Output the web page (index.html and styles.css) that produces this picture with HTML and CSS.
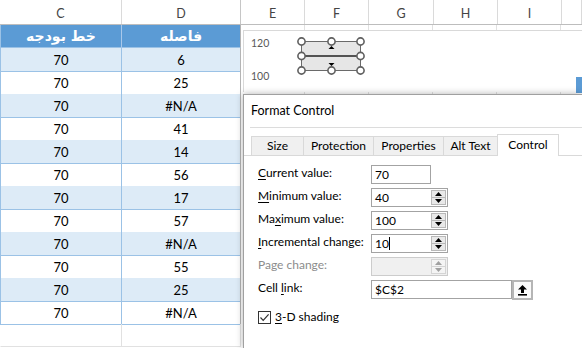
FILE: index.html
```html
<!DOCTYPE html>
<html>
<head>
<meta charset="utf-8">
<link rel="stylesheet" href="styles.css">
</head>
<body>
<div class="sheet">
  <div class="colheads">
    <div class="ch">C</div>
    <div class="ch ch-d">D</div>
    <div class="ch">E</div>
    <div class="ch">F</div>
    <div class="ch">G</div>
    <div class="ch">H</div>
    <div class="ch">I</div>
    <div class="ch"></div>
  </div>
  <div class="main">
    <div class="table">
      <div class="row head"><div class="cell" dir="rtl">خط بودجه</div><div class="cell" dir="rtl">فاصله</div></div>
      <div class="row alt"><div class="cell">70</div><div class="cell">6</div></div>
      <div class="row"><div class="cell">70</div><div class="cell">25</div></div>
      <div class="row alt"><div class="cell">70</div><div class="cell">#N/A</div></div>
      <div class="row"><div class="cell">70</div><div class="cell">41</div></div>
      <div class="row alt"><div class="cell">70</div><div class="cell">14</div></div>
      <div class="row"><div class="cell">70</div><div class="cell">56</div></div>
      <div class="row alt"><div class="cell">70</div><div class="cell">17</div></div>
      <div class="row"><div class="cell">70</div><div class="cell">57</div></div>
      <div class="row alt"><div class="cell">70</div><div class="cell">#N/A</div></div>
      <div class="row"><div class="cell">70</div><div class="cell">55</div></div>
      <div class="row alt"><div class="cell">70</div><div class="cell">25</div></div>
      <div class="row"><div class="cell">70</div><div class="cell">#N/A</div></div>
      <div class="row empty"><div class="cell"></div><div class="cell"></div></div>
    </div>
    <div class="right">
      <div class="chart">
        <span class="axis a1">120</span>
        <span class="axis a2">100</span>
        <svg class="spinctl" width="72" height="42" viewBox="0 0 72 42">
          <rect x="5.5" y="5.5" width="59" height="29" fill="#e6e6e6" stroke="#6a6a6a" stroke-width="1"/>
          <line x1="5.5" y1="20" x2="64.5" y2="20" stroke="#222" stroke-width="1.5"/>
          <path d="M32.5 13 L38.5 13 L35.5 10 Z" fill="#000"/>
          <path d="M32.5 27 L38.5 27 L35.5 30 Z" fill="#000"/>
          <g fill="#fff" stroke="#5f5f5f" stroke-width="1.6">
            <circle cx="5.5" cy="5.5" r="3.6"/>
            <circle cx="35.5" cy="5.5" r="3.6"/>
            <circle cx="64.5" cy="5.5" r="3.6"/>
            <circle cx="5.5" cy="20" r="3.6"/>
            <circle cx="64.5" cy="20" r="3.6"/>
            <circle cx="5.5" cy="34.5" r="3.6"/>
            <circle cx="35.5" cy="34.5" r="3.6"/>
            <circle cx="64.5" cy="34.5" r="3.6"/>
          </g>
        </svg>
        <div class="bar"></div>
      </div>
      <div class="dialog">
        <div class="title">Format Control</div>
        <div class="tabs">
          <div class="tab t-size">Size</div>
          <div class="tab t-prot">Protection</div>
          <div class="tab t-prop">Properties</div>
          <div class="tab t-alt">Alt Text</div>
          <div class="tab t-ctl sel">Control</div>
        </div>
        <div class="page">
          <div class="form">
            <label class="lbl"><u>C</u>urrent value:</label>
            <div class="box w60"><span class="val">70</span></div>

            <label class="lbl"><u>M</u>inimum value:</label>
            <div class="box w77"><span class="val">40</span>
              <div class="spin"><div class="half"><svg width="7" height="4" viewBox="0 0 7 4"><path d="M0 4 L3.5 0 L7 4 Z"/></svg></div><div class="half"><svg width="7" height="4" viewBox="0 0 7 4"><path d="M0 0 L3.5 4 L7 0 Z"/></svg></div></div>
            </div>

            <label class="lbl">Ma<u>x</u>imum value:</label>
            <div class="box w77"><span class="val">100</span>
              <div class="spin"><div class="half"><svg width="7" height="4" viewBox="0 0 7 4"><path d="M0 4 L3.5 0 L7 4 Z"/></svg></div><div class="half"><svg width="7" height="4" viewBox="0 0 7 4"><path d="M0 0 L3.5 4 L7 0 Z"/></svg></div></div>
            </div>

            <label class="lbl"><u>I</u>ncremental change:</label>
            <div class="box w77"><span class="val">10<span class="caret"></span></span>
              <div class="spin"><div class="half"><svg width="7" height="4" viewBox="0 0 7 4"><path d="M0 4 L3.5 0 L7 4 Z"/></svg></div><div class="half"><svg width="7" height="4" viewBox="0 0 7 4"><path d="M0 0 L3.5 4 L7 0 Z"/></svg></div></div>
            </div>

            <label class="lbl dis">Page change:</label>
            <div class="box w77 disabled"><span class="val"></span>
              <div class="spin"><div class="half"><svg width="7" height="4" viewBox="0 0 7 4"><path d="M0 4 L3.5 0 L7 4 Z"/></svg></div><div class="half"><svg width="7" height="4" viewBox="0 0 7 4"><path d="M0 0 L3.5 4 L7 0 Z"/></svg></div></div>
            </div>

            <label class="lbl">Cell <u>l</u>ink:</label>
            <div class="linkwrap">
              <div class="box w141"><span class="val">$C$2</span></div>
              <div class="refbtn"><svg width="11" height="12" viewBox="0 0 11 12"><path d="M5.5 1 L10 5.5 H7 V9 H4 V5.5 H1 Z" fill="#000"/><rect x="1" y="10" width="9" height="1.6" fill="#000"/></svg></div>
            </div>
          </div>
          <div class="check">
            <span class="cb"><svg width="11" height="11" viewBox="0 0 11 11"><path d="M1.5 5.5 L4.2 8.3 L9.6 2.4" fill="none" stroke="#333" stroke-width="1.2"/></svg></span>
            <span class="cbtext"><u>3</u>-D shading</span>
          </div>
        </div>
      </div>
    </div>
  </div>
</div>
</body>
</html>
```
FILE: styles.css
```css
* { box-sizing: border-box; margin: 0; padding: 0; }
html, body { width: 582px; height: 348px; overflow: hidden; background: #fff; }
body { font-family: Lato, "Open Sans", sans-serif; color: #000; }

.sheet { display: flex; flex-direction: column; height: 348px; }

.colheads {
  display: grid;
  grid-template-columns: 122px 119px 64px 64px 65px 64px 64px 1fr;
  height: 25px;
  border-bottom: 1px solid #bdbdbd;
  background: #fff;
  flex: none;
}
.ch {
  border-right: 1px solid #dadada;
  text-align: center;
  font-size: 12.5px;
  line-height: 16px;
  padding-top: 6px;
  color: #444;
}
.ch-d { border-right-color: #c6c6c6; }

.main { display: grid; grid-template-columns: 241px 1fr; flex: 1; min-height: 0; }

.table { display: flex; flex-direction: column; }
.row { display: grid; grid-template-columns: 122px 119px; height: 23px; flex: none; }
.cell {
  border-bottom: 1px solid #9bc2e6;
  border-right: 1px solid #9bc2e6;
  text-align: center;
  font-size: 13px;
  line-height: 22px;
  padding-top: 1px;
}
.cell:first-child { border-left: 1px solid #9bc2e6; }
.cell:last-child { border-right-color: #b4b4b4; }
.row.alt .cell { background: #ddebf7; }
.row.head .cell {
  background: #5b9bd5;
  color: #fff;
  font-family: "DejaVu Sans", sans-serif;
  font-weight: bold;
  font-size: 14px;
  line-height: 22px;
  padding-top: 0;
}
.row.head .cell:first-child { border-right-color: #a9c8ea; }
.row.empty .cell { border-color: #e1e1e1; }
.row.empty .cell:first-child { border-left-color: transparent; }

.right {
  display: flex;
  flex-direction: column;
  padding: 5px 0 0 2px;
  background: #fff repeating-linear-gradient(to right, transparent 0 63px, #e1e1e1 63px 64px);
  min-height: 0;
}

.chart {
  position: relative;
  height: 62px;
  flex: none;
  background: #fff;
  border-top: 1px solid #d9d9d9;
  border-left: 1px solid #d9d9d9;
}
.axis {
  position: absolute;
  left: 7px;
  font-size: 10.5px;
  line-height: 14px;
  color: #595959;
}
.a1 { top: 5px; }
.a2 { top: 38px; }
.spinctl { position: absolute; left: 52px; top: 5px; }
.bar { position: absolute; right: 0; top: 46px; width: 6px; height: 16px; background: #5b9bd5; }

.dialog {
  margin-top: 2px;
  flex: 1;
  background: #fff;
  border-top: 1px solid #a0a0a0;
  border-left: 1px solid #a0a0a0;
  box-shadow: 0 0 7px rgba(0, 0, 0, 0.3);
  display: flex;
  flex-direction: column;
  position: relative;
}
.title {
  height: 32px;
  line-height: 32px;
  padding-left: 7px;
  font-size: 12.5px;
  flex: none;
}
.tabs {
  height: 28px;
  margin-left: 6px;
  padding-left: 1px;
  border-top: 1px solid #dcdcdc;
  display: flex;
  align-items: flex-end;
  flex: none;
  background: #fff;
}
.tab {
  height: 19px;
  border: 1px solid #d9d9d9;
  border-bottom: none;
  margin-right: -1px;
  background: #f0f0f0;
  font-size: 12px;
  line-height: 17px;
  text-align: center;
}
.t-size { width: 53px; }
.t-prot { width: 71px; }
.t-prop { width: 71px; }
.t-alt { width: 55px; }
.t-ctl { width: 62px; }
.tab.sel {
  height: 22px;
  margin-bottom: -1px;
  background: #fff;
  position: relative;
  z-index: 1;
  line-height: 19px;
}

.page {
  flex: 1;
  border-top: 1px solid #d9d9d9;
  padding: 9px 0 0 14px;
}
.form {
  display: grid;
  grid-template-columns: 113px auto;
  grid-auto-rows: 19px;
  row-gap: 4px;
  align-items: start;
  justify-items: start;
}
.lbl { font-size: 12px; line-height: 16px; }
.lbl u, .cbtext u { text-decoration-thickness: 1px; text-underline-offset: 2px; }
.lbl.dis { color: #8c8c8c; }

.box {
  height: 19px;
  border: 1px solid #a3a3a3;
  display: flex;
  align-items: stretch;
  background: #fff;
}
.w60 { width: 60px; }
.w77 { width: 77px; }
.w141 { width: 141px; }
.val { flex: 1; padding-left: 3px; font-size: 12px; line-height: 17px; }
.caret { display: inline-block; width: 1px; height: 13px; background: #000; vertical-align: -2px; }

.spin { width: 15px; margin: 1px 1px 1px 0; display: flex; flex-direction: column; }
.half {
  flex: 1;
  background: #e9e9e9;
  border: 1px solid #b9b9b9;
  display: flex;
  align-items: center;
  justify-content: center;
}
.half + .half { border-top: none; }
.half svg { display: block; fill: #000; }
.box.disabled { background: #f0f0f0; border-color: #cccccc; }
.box.disabled .half { background: #f4f4f4; border-color: #d4d4d4; }
.box.disabled .half svg { fill: #a0a0a0; }

.linkwrap { display: flex; align-items: flex-start; }
.refbtn {
  width: 21px;
  height: 20px;
  border: 2px solid #b5b5b5;
  background: #fafafa;
  display: flex;
  align-items: center;
  justify-content: center;
}
.refbtn svg { display: block; }

.check { display: flex; align-items: center; gap: 4px; margin-top: 10px; }
.cb {
  width: 13px;
  height: 13px;
  border: 1px solid #333;
  background: #fff;
  display: flex;
  align-items: center;
  justify-content: center;
}
.cb svg { display: block; }
.cbtext { font-size: 12px; line-height: 16px; }
```
